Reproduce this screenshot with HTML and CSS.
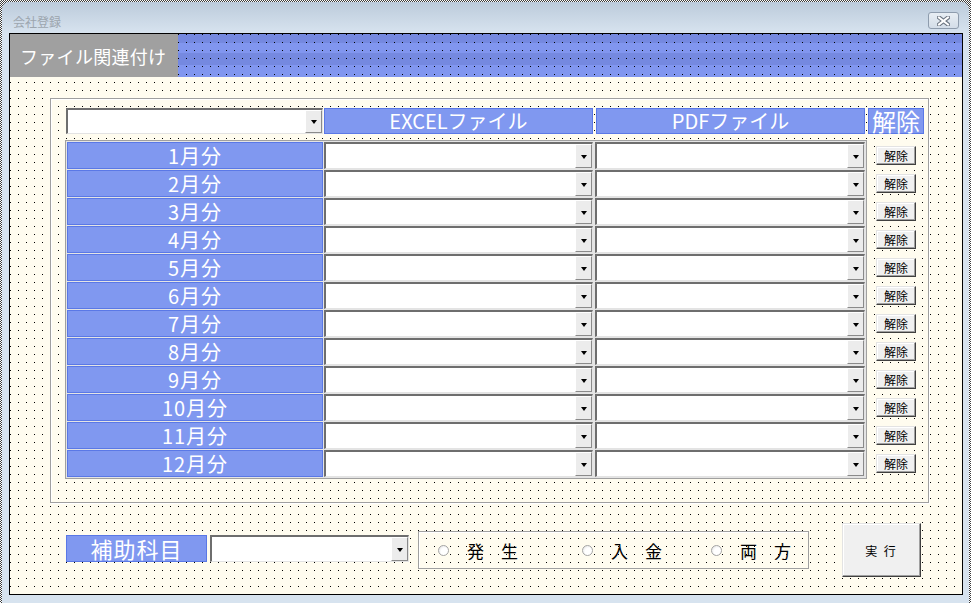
FILE: index.html
```html
<!DOCTYPE html>
<html lang="ja">
<head>
    <meta charset="UTF-8">
    <title>会社登録</title>
    <link rel="stylesheet" href="styles.css">
</head>
<body>
<div class="selection">
    <div class="window">
        <!-- タイトルバー -->
        <div class="titlebar">
            <span class="title">会社登録</span>
            <span class="close">
                <svg width="13" height="10" viewBox="0 0 13 10">
                    <path d="M2 1.5 L11 8.5 M11 1.5 L2 8.5" stroke="#6b7480" stroke-width="4.2" stroke-linecap="square"/>
                    <path d="M2 1.5 L11 8.5 M11 1.5 L2 8.5" stroke="#fff" stroke-width="2" stroke-linecap="square"/>
                </svg>
            </span>
        </div>

        <div class="form">
            <div class="band">
                <div class="band-label">ファイル関連付け</div>
                <div class="band-fill"></div>
            </div>

            <!-- 月別ファイル -->
            <div class="frame">
                <div class="head-row">
                    <div class="combo head-combo"><span class="drop"></span></div>
                    <div class="head excel">EXCELファイル</div>
                    <div class="head pdf">PDFファイル</div>
                    <div class="head clear">解除</div>
                </div>

                <div class="grid-area">
                    <div class="grid">
                        <div class="month">1月分</div>
                        <div class="combo"><span class="drop"></span></div>
                        <div class="combo pdf-combo"><span class="drop"></span></div>
                        <div class="month">2月分</div>
                        <div class="combo"><span class="drop"></span></div>
                        <div class="combo pdf-combo"><span class="drop"></span></div>
                        <div class="month">3月分</div>
                        <div class="combo"><span class="drop"></span></div>
                        <div class="combo pdf-combo"><span class="drop"></span></div>
                        <div class="month">4月分</div>
                        <div class="combo"><span class="drop"></span></div>
                        <div class="combo pdf-combo"><span class="drop"></span></div>
                        <div class="month">5月分</div>
                        <div class="combo"><span class="drop"></span></div>
                        <div class="combo pdf-combo"><span class="drop"></span></div>
                        <div class="month">6月分</div>
                        <div class="combo"><span class="drop"></span></div>
                        <div class="combo pdf-combo"><span class="drop"></span></div>
                        <div class="month">7月分</div>
                        <div class="combo"><span class="drop"></span></div>
                        <div class="combo pdf-combo"><span class="drop"></span></div>
                        <div class="month">8月分</div>
                        <div class="combo"><span class="drop"></span></div>
                        <div class="combo pdf-combo"><span class="drop"></span></div>
                        <div class="month">9月分</div>
                        <div class="combo"><span class="drop"></span></div>
                        <div class="combo pdf-combo"><span class="drop"></span></div>
                        <div class="month">10月分</div>
                        <div class="combo"><span class="drop"></span></div>
                        <div class="combo pdf-combo"><span class="drop"></span></div>
                        <div class="month">11月分</div>
                        <div class="combo"><span class="drop"></span></div>
                        <div class="combo pdf-combo"><span class="drop"></span></div>
                        <div class="month">12月分</div>
                        <div class="combo"><span class="drop"></span></div>
                        <div class="combo pdf-combo"><span class="drop"></span></div>
                    </div>

                    <div class="btn-col">
                        <button class="small-btn">解除</button>
                        <button class="small-btn">解除</button>
                        <button class="small-btn">解除</button>
                        <button class="small-btn">解除</button>
                        <button class="small-btn">解除</button>
                        <button class="small-btn">解除</button>
                        <button class="small-btn">解除</button>
                        <button class="small-btn">解除</button>
                        <button class="small-btn">解除</button>
                        <button class="small-btn">解除</button>
                        <button class="small-btn">解除</button>
                        <button class="small-btn">解除</button>
                    </div>
                </div>
            </div>

            <!-- 補助科目・区分 -->
            <div class="bottom">
                <div class="sub-label">補助科目</div>
                <div class="combo sub-combo"><span class="drop"></span></div>
                <div class="radio-frame">
                    <label class="option opt1"><span class="radio"></span>発　生</label>
                    <label class="option opt2"><span class="radio"></span>入　金</label>
                    <label class="option"><span class="radio"></span>両　方</label>
                </div>
                <button class="run-btn">実 行</button>
            </div>
        </div>
    </div>
</div>
</body>
</html>
```

FILE: styles.css
```css
html, body {
    margin: 0;
}

body {
    width: 971px;
    height: 603px;
    overflow: hidden;
    font-family: "Noto Sans CJK JP", sans-serif;
    background: #fff;
}

/* 選択枠 */
.selection {
    width: 971px;
    height: 606px;
    box-sizing: border-box;
    padding: 2px;
    background: repeating-conic-gradient(#3c3c3c 0 25%, #fff 0 50%) 0 0 / 2px 2px;
}

.window {
    height: 100%;
    box-sizing: border-box;
    border-radius: 7px 7px 0 0;
    background: linear-gradient(#bccbdb, #d7e3ef 31px, #d7e3ef);
    padding: 0 6px 9px 7px;
    display: flex;
    flex-direction: column;
}

.titlebar {
    height: 31px;
    display: flex;
    justify-content: space-between;
    align-items: flex-start;
}

.title {
    margin: 13px 0 0 4px;
    font-size: 12px;
    line-height: 14px;
    color: #9ca5ae;
}

.close {
    width: 31px;
    height: 17px;
    box-sizing: border-box;
    margin: 10px 4px 0 0;
    border: 1px solid #8e9cad;
    border-radius: 3px;
    background: linear-gradient(#e8eef4, #d3dde8);
    display: flex;
    align-items: center;
    justify-content: center;
}

/* フォーム本体 */
.form {
    flex: 1;
    border: 1px solid #000;
    background: conic-gradient(from 270deg at 1px 1px, #000 25%, transparent 0) 0 0 / 8px 8px, #fffcef;
}

.band {
    display: flex;
    height: 43px;
}

.band-label {
    width: 168px;
    box-sizing: border-box;
    padding-left: 10px;
    background: #a0a0a0;
    color: #fff;
    font-size: 18px;
    letter-spacing: 0.3px;
    display: flex;
    align-items: center;
}

.band-fill {
    flex: 1;
    background:
        conic-gradient(from 270deg at 1px 1px, #000 25%, transparent 0) 0 0 / 8px 8px,
        linear-gradient(#7589e0 0 9px, #8196ef 9px 19px, #7589e0 19px 31px, #8196ef 31px);
}

.frame {
    width: 879px;
    height: 405px;
    box-sizing: border-box;
    margin: 21px 0 0 40px;
    padding: 9px 0 0 15px;
    border: 1px solid #a0a0a0;
    box-shadow: inset 1px 1px #fff, 1px 1px #fff;
}

.head-row {
    display: flex;
    height: 26px;
}

.head {
    box-sizing: border-box;
    background: #8098f0;
    border: 1px solid #5a78e6;
    color: #fff;
    font-size: 20px;
    line-height: 24px;
    text-align: center;
}

.head-combo {
    width: 257px;
}

.excel {
    width: 269px;
    margin-left: 1px;
}

.pdf {
    width: 269px;
    margin-left: 3px;
}

.clear {
    width: 56px;
    margin-left: 3px;
    font-size: 24px;
}

/* コンボボックス */
.combo {
    box-sizing: border-box;
    background: #fff;
    border-top: 2px solid #6e6e6e;
    border-left: 2px solid #6e6e6e;
    border-bottom: 1px solid #e3e3e3;
    border-right: 1px solid #e3e3e3;
    display: flex;
    justify-content: flex-end;
}

.drop {
    width: 17px;
    box-sizing: border-box;
    background: #ececec;
    border: 1px solid;
    border-color: #fff #8a8a8a #8a8a8a #fff;
    display: flex;
    align-items: center;
    justify-content: center;
}

.drop::after {
    content: "";
    border-top: 4px solid #000;
    border-left: 3.5px solid transparent;
    border-right: 3.5px solid transparent;
    margin-top: 1px;
}

.grid-area {
    display: flex;
    margin: 6px 0 0 -1px;
}

.grid {
    border: 1px solid #a0a0a0;
    padding: 1px;
    background: #e4e4e4;
    display: grid;
    grid-template-columns: 256px 269px 271px;
    grid-auto-rows: 27px;
    gap: 1px;
}

.pdf-combo {
    margin-left: 1px;
}

.month {
    box-sizing: border-box;
    background: #8098f0;
    border: 1px solid #5a78e6;
    color: #fff;
    font-size: 20px;
    line-height: 25px;
    letter-spacing: 1px;
    text-align: center;
}

.btn-col {
    margin-left: 9px;
    padding-top: 2px;
    display: flex;
    flex-direction: column;
}

.small-btn {
    width: 40px;
    height: 19px;
    margin: 4px 0 5px;
    padding: 0;
    font-family: "Noto Sans CJK JP", sans-serif;
    font-size: 12px;
    line-height: 15px;
    color: #000;
    background: #f0f0f0;
    border: 1px solid;
    border-color: #e3e3e3 #404040 #404040 #e3e3e3;
    box-shadow: inset -1px -1px #a0a0a0, inset 1px 1px #fff;
}

/* 下段 */
.bottom {
    display: flex;
    align-items: center;
    margin: 20px 0 0 56px;
}

.sub-label {
    width: 141px;
    height: 27px;
    box-sizing: border-box;
    margin-bottom: 3px;
    background: #8098f0;
    border: 1px solid #5a78e6;
    color: #fff;
    font-size: 22px;
    line-height: 25px;
    letter-spacing: 1px;
    text-align: center;
}

.sub-combo {
    width: 199px;
    height: 27px;
    margin: 0 0 3px 3px;
}

.radio-frame {
    width: 391px;
    height: 38px;
    box-sizing: border-box;
    margin-left: 9px;
    padding-left: 19px;
    border: 1px solid #a0a0a0;
    box-shadow: inset 1px 1px #fff;
    display: flex;
    align-items: center;
}

.option {
    display: flex;
    align-items: center;
    font-size: 17px;
    color: #000;
}

.opt1 {
    width: 144px;
}

.opt2 {
    width: 129px;
}

.radio {
    width: 11px;
    height: 11px;
    box-sizing: border-box;
    margin-right: 18px;
    border: 1px solid #a4a4a4;
    border-radius: 50%;
    background: radial-gradient(circle at 65% 65%, #fff 45%, #dcdcdc);
}

.run-btn {
    width: 79px;
    height: 54px;
    margin-left: 33px;
    padding: 0;
    font-family: "Noto Sans CJK JP", sans-serif;
    font-size: 12px;
    letter-spacing: 2px;
    color: #000;
    background: #f0f0f0;
    border: 1px solid;
    border-color: #e3e3e3 #404040 #404040 #e3e3e3;
    box-shadow: inset -1px -1px #a0a0a0, inset 1px 1px #fff;
}
```
